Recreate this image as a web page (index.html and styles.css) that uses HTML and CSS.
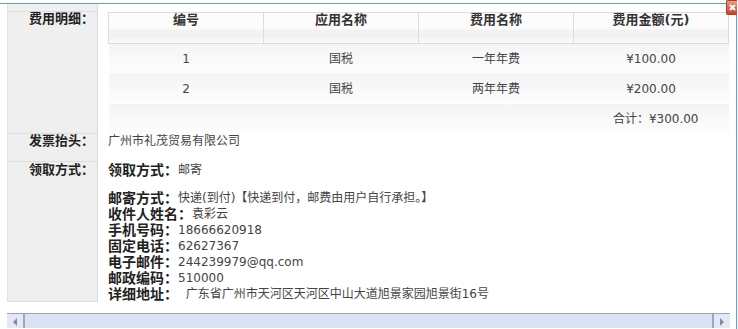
FILE: index.html
```html
<!DOCTYPE html>
<html lang="zh-CN">
<head>
  <meta charset="UTF-8">
  <title>发票详情</title>
  <link rel="stylesheet" href="styles.css">
</head>
<body>

<div class="dialog">
  <a class="close" href="#" title="关闭">
    <svg width="12" height="13" viewBox="0 0 12 13"><path d="M3 4 L8 9 M8 4 L3 9" stroke="#fff" stroke-width="2"/></svg>
  </a>

  <div class="frame">
    <table class="form">
      <tr class="cut">
        <th class="label"></th>
        <td></td>
      </tr>
      <tr>
        <th class="label">费用明细：</th>
        <td class="value">
          <table class="fees">
            <tr>
              <th>编号</th>
              <th>应用名称</th>
              <th>费用名称</th>
              <th>费用金额(元)</th>
            </tr>
            <tr>
              <td>1</td>
              <td>国税</td>
              <td>一年年费</td>
              <td>¥100.00</td>
            </tr>
            <tr>
              <td>2</td>
              <td>国税</td>
              <td>两年年费</td>
              <td>¥200.00</td>
            </tr>
            <tr class="total">
              <td colspan="4">合计：¥300.00</td>
            </tr>
          </table>
        </td>
      </tr>
      <tr class="invoice">
        <th class="label">发票抬头：</th>
        <td class="value">广州市礼茂贸易有限公司</td>
      </tr>
      <tr class="delivery">
        <th class="label">领取方式：</th>
        <td class="value">
          <p class="first"><b>领取方式：</b>邮寄</p>
          <p><b>邮寄方式：</b>快递(到付)【快递到付，邮费由用户自行承担。】</p>
          <p><b>收件人姓名：</b>袁彩云</p>
          <p><b>手机号码：</b>18666620918</p>
          <p><b>固定电话：</b>62627367</p>
          <p><b>电子邮件：</b>244239979@qq.com</p>
          <p><b>邮政编码：</b>510000</p>
          <p><b>详细地址：</b>&nbsp;&nbsp;广东省广州市天河区天河区中山大道旭景家园旭景街16号</p>
        </td>
      </tr>
    </table>

    <div class="hscroll">
      <span class="arrow left"></span>
      <span class="thumb"></span>
      <span class="arrow right"></span>
    </div>
  </div>
</div>

</body>
</html>
```

FILE: styles.css
```css
body {
  margin: 0;
  font-family: "DejaVu Sans", "Noto Sans CJK SC", sans-serif;
  font-size: 12px;
  color: #333;
  background-color: #fff;
  overflow: hidden;
}
.dialog {
  position: relative;
  width: 736px;
  height: 325px;
  margin-top: 3px;
  border-top: 1px solid #5d9fd5;
  border-right: 1px solid #5d9fd5;
}
.close {
  position: absolute;
  left: 726px;
  top: -4px;
  width: 10px;
  height: 13px;
  background: linear-gradient(#f09a80, #c9422c);
  border: 1px solid #a8402c;
  border-right: 0;
  border-radius: 2px 0 0 2px;
  overflow: hidden;
}
.close svg {
  display: block;
}
.frame {
  padding-left: 7px;
  width: 723px;
}
.form {
  border-collapse: collapse;
  width: 723px;
}
.form td, .form th {
  padding: 0;
}
.label {
  width: 88px;
  background-color: #efefef;
  border-left: 1px solid #e4e4e4;
  border-right: 1px solid #dcdcdc;
  border-bottom: 1px solid #dedede;
  text-align: right;
  vertical-align: top;
  padding-right: 3px !important;
  font-size: 13px;
  font-weight: bold;
  line-height: 14px;
  color: #222;
}
.cut th {
  height: 7px;
}
.invoice td {
  height: 28px;
}
.delivery .label {
  line-height: 16px;
}
.value {
  padding-left: 10px !important;
  vertical-align: top;
  line-height: 14px;
  color: #444;
}
.fees {
  border-collapse: collapse;
  width: 621px;
}
.fees th {
  width: 25%;
  height: 30px;
  border: 1px solid #dcdcdc;
  background: linear-gradient(#fcfcfc 0, #fcfcfc 55%, #f2f2f2 56%, #f2f2f2 86%, #f8f8f8 87%);
  vertical-align: top;
  font-size: 13px;
  line-height: 13px;
  color: #333;
  padding: 0;
}
.fees td {
  height: 30px;
  text-align: center;
  background: linear-gradient(#f4f4f4, #fdfdfd);
  color: #444;
  padding: 0;
}
.fees .total td {
  text-align: right;
  padding-right: 30px;
}
.value p {
  margin: 0;
  height: 16px;
  line-height: 16px;
}
.value p.first {
  margin-bottom: 12px;
}
.value b {
  font-size: 14px;
  line-height: 16px;
  vertical-align: top;
  color: #222;
}
.hscroll {
  display: flex;
  height: 14px;
  margin-top: 11px;
  border-top: 1px solid #95a3c4;
  background-color: #dbe2f4;
}
.arrow {
  width: 16px;
  background-color: #e3e8f6;
  position: relative;
}
.arrow.left {
  border-right: 2px solid #9aa8c8;
}
.arrow.right {
  border-left: 2px solid #9aa8c8;
}
.arrow::after {
  content: "";
  position: absolute;
  top: 4px;
  left: 6px;
  border-top: 4px solid transparent;
  border-bottom: 4px solid transparent;
}
.arrow.left::after {
  border-right: 4px solid #8a8a8a;
}
.arrow.right::after {
  border-left: 4px solid #8a8a8a;
}
.thumb {
  flex: 1;
}
```
